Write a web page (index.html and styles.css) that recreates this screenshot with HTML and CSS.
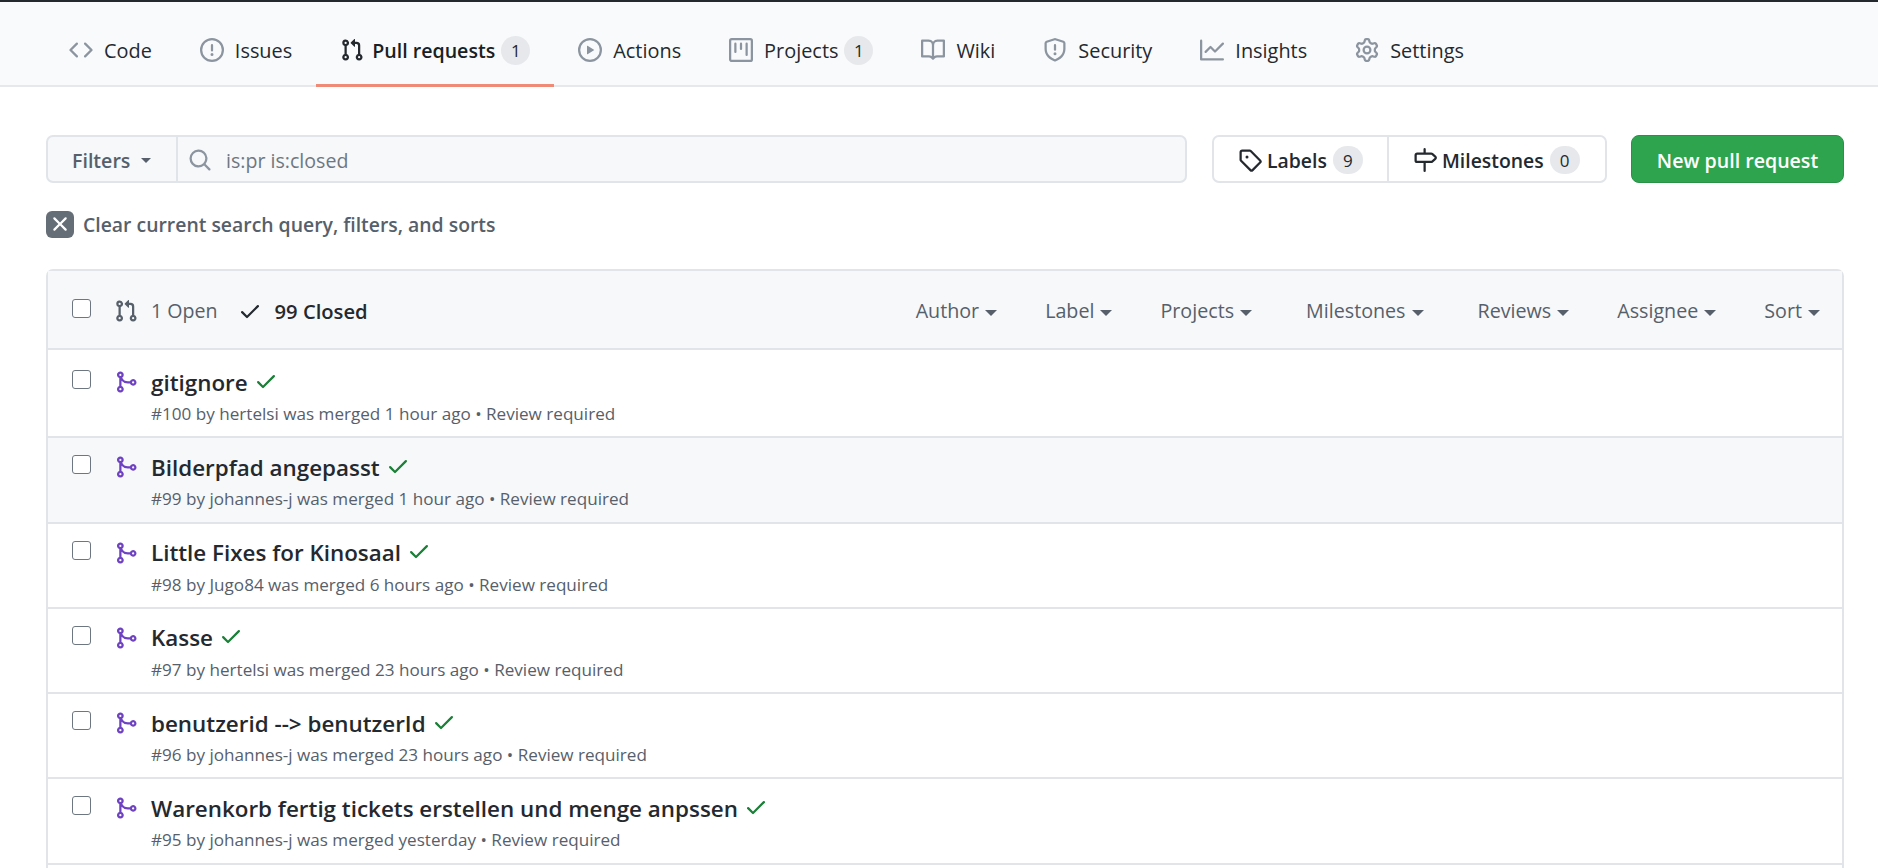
FILE: index.html
```html
<!DOCTYPE html>
<html lang="en">
  <head>
    <meta charset="UTF-8" />
    <title>Pull requests</title>
    <link rel="stylesheet" href="styles.css">
  </head>

  <body>
    <svg class="defs" aria-hidden="true">
      <symbol id="i-code" viewBox="0 0 16 16"><path d="m11.28 3.22 4.25 4.25a.75.75 0 0 1 0 1.06l-4.25 4.25a.749.749 0 0 1-1.275-.326.749.749 0 0 1 .215-.734L13.94 8l-3.72-3.72a.749.749 0 0 1 .326-1.275.749.749 0 0 1 .734.215Zm-6.56 0a.751.751 0 0 1 1.042.018.751.751 0 0 1 .018 1.042L2.06 8l3.72 3.72a.749.749 0 0 1-.326 1.275.749.749 0 0 1-.734-.215L.47 8.53a.75.75 0 0 1 0-1.06Z"/></symbol>
      <symbol id="i-issue" viewBox="0 0 16 16"><path d="M8 1.5a6.5 6.5 0 100 13 6.5 6.5 0 000-13zM0 8a8 8 0 1116 0A8 8 0 010 8zm9 3a1 1 0 11-2 0 1 1 0 012 0zm-.25-6.25a.75.75 0 00-1.5 0v3.5a.75.75 0 001.5 0v-3.5z"/></symbol>
      <symbol id="i-pr" viewBox="0 0 16 16"><path d="M1.5 3.25a2.25 2.25 0 1 1 3 2.122v5.256a2.251 2.251 0 1 1-1.5 0V5.372A2.25 2.25 0 0 1 1.5 3.25Zm5.677-.177L9.573.677A.25.25 0 0 1 10 .854V2.5h1A2.5 2.5 0 0 1 13.5 5v5.628a2.251 2.251 0 1 1-1.5 0V5a1 1 0 0 0-1-1h-1v1.646a.25.25 0 0 1-.427.177L7.177 3.427a.25.25 0 0 1 0-.354ZM3.75 2.5a.75.75 0 1 0 0 1.5.75.75 0 0 0 0-1.5Zm0 9.5a.75.75 0 1 0 0 1.5.75.75 0 0 0 0-1.5Zm8.25.75a.75.75 0 1 0 1.5 0 .75.75 0 0 0-1.5 0Z"/></symbol>
      <symbol id="i-play" viewBox="0 0 16 16"><path d="M8 0a8 8 0 1 1 0 16A8 8 0 0 1 8 0ZM1.5 8a6.5 6.5 0 1 0 13 0 6.5 6.5 0 0 0-13 0Zm4.879-2.773 4.264 2.559a.25.25 0 0 1 0 .428l-4.264 2.559A.25.25 0 0 1 6 10.559V5.442a.25.25 0 0 1 .379-.215Z"/></symbol>
      <symbol id="i-project" viewBox="0 0 16 16"><path d="M1.75 0A1.75 1.75 0 0 0 0 1.75v12.5C0 15.216.784 16 1.75 16h12.5A1.75 1.75 0 0 0 16 14.25V1.75A1.75 1.75 0 0 0 14.25 0ZM1.5 1.75a.25.25 0 0 1 .25-.25h12.5a.25.25 0 0 1 .25.25v12.5a.25.25 0 0 1-.25.25H1.75a.25.25 0 0 1-.25-.25ZM11.75 3a.75.75 0 0 0-.75.75v7.5a.75.75 0 0 0 1.5 0v-7.5a.75.75 0 0 0-.75-.75Zm-8.25.75a.75.75 0 0 1 1.5 0v5.5a.75.75 0 0 1-1.5 0ZM8 3a.75.75 0 0 0-.75.75v3.5a.75.75 0 0 0 1.5 0v-3.5A.75.75 0 0 0 8 3Z"/></symbol>
      <symbol id="i-book" viewBox="0 0 16 16"><path d="M0 1.75A.75.75 0 0 1 .75 1h4.253c1.227 0 2.317.59 3 1.501A3.743 3.743 0 0 1 11.006 1h4.245a.75.75 0 0 1 .75.75v10.5a.75.75 0 0 1-.75.75h-4.507a2.25 2.25 0 0 0-1.591.659l-.622.621a.75.75 0 0 1-1.06 0l-.622-.621A2.25 2.25 0 0 0 5.258 13H.75a.75.75 0 0 1-.75-.75Zm7.251 10.324.004-5.073-.002-2.253A2.25 2.25 0 0 0 5.003 2.5H1.5v9h3.757a3.75 3.75 0 0 1 1.994.574ZM8.755 4.75l-.004 7.322a3.752 3.752 0 0 1 1.992-.572H14.5v-9h-3.495a2.25 2.25 0 0 0-2.25 2.25Z"/></symbol>
      <symbol id="i-shield" viewBox="0 0 16 16"><path d="M7.467.133a1.748 1.748 0 0 1 1.066 0l5.25 1.68A1.75 1.75 0 0 1 15 3.48V7c0 1.566-.32 3.182-1.303 4.682-.983 1.498-2.585 2.813-5.032 3.855a1.697 1.697 0 0 1-1.33 0c-2.447-1.042-4.049-2.357-5.032-3.855C1.32 10.182 1 8.566 1 7V3.48a1.75 1.75 0 0 1 1.217-1.667Zm.61 1.429a.25.25 0 0 0-.153 0l-5.25 1.68a.25.25 0 0 0-.174.238V7c0 1.358.275 2.666 1.057 3.86.784 1.194 2.121 2.34 4.366 3.297a.196.196 0 0 0 .154 0c2.245-.956 3.582-2.104 4.366-3.298C13.225 9.666 13.5 8.36 13.5 7V3.48a.251.251 0 0 0-.174-.237l-5.25-1.68ZM8.75 4.75v3a.75.75 0 0 1-1.5 0v-3a.75.75 0 0 1 1.5 0ZM9 10.5a1 1 0 1 1-2 0 1 1 0 0 1 2 0Z"/></symbol>
      <symbol id="i-graph" viewBox="0 0 16 16"><path d="M1.5 1.75V13.5h13.75a.75.75 0 0 1 0 1.5H.75a.75.75 0 0 1-.75-.75V1.75a.75.75 0 0 1 1.5 0Zm14.28 2.53-5.25 5.25a.75.75 0 0 1-1.06 0L7 7.06 4.28 9.78a.751.751 0 0 1-1.042-.018.751.751 0 0 1-.018-1.042l3.25-3.25a.75.75 0 0 1 1.06 0L10 7.94l4.72-4.72a.751.751 0 0 1 1.042.018.751.751 0 0 1 .018 1.042Z"/></symbol>
      <symbol id="i-gear" viewBox="0 0 16 16"><path d="M8 0a8.2 8.2 0 0 1 .701.031C9.444.095 9.99.645 10.16 1.29l.288 1.107c.018.066.079.158.212.224.231.114.454.243.668.386.123.082.233.09.299.071l1.103-.303c.644-.176 1.392.021 1.82.63.27.385.506.792.704 1.218.315.675.111 1.422-.364 1.891l-.814.806c-.049.048-.098.147-.088.294.016.257.016.515 0 .772-.01.147.038.246.088.294l.814.806c.475.469.679 1.216.364 1.891a7.977 7.977 0 0 1-.704 1.217c-.428.61-1.176.807-1.82.63l-1.102-.302c-.067-.019-.177-.011-.3.071a5.909 5.909 0 0 1-.668.386c-.133.066-.194.158-.211.224l-.29 1.106c-.168.646-.715 1.196-1.458 1.26a8.006 8.006 0 0 1-1.402 0c-.743-.064-1.289-.614-1.458-1.26l-.289-1.106c-.018-.066-.079-.158-.212-.224a5.738 5.738 0 0 1-.668-.386c-.123-.082-.233-.09-.299-.071l-1.103.303c-.644.176-1.392-.021-1.82-.63a8.12 8.12 0 0 1-.704-1.218c-.315-.675-.111-1.422.363-1.891l.815-.806c.05-.048.098-.147.088-.294a6.214 6.214 0 0 1 0-.772c.01-.147-.038-.246-.088-.294l-.815-.806C.635 6.045.431 5.298.746 4.623a7.92 7.92 0 0 1 .704-1.217c.428-.61 1.176-.807 1.82-.63l1.102.302c.067.019.177.011.3-.071.214-.143.437-.272.668-.386.133-.066.194-.158.211-.224l.29-1.106C6.009.645 6.556.095 7.299.03 7.53.01 7.764 0 8 0Zm-.571 1.525c-.036.003-.108.036-.137.146l-.289 1.105c-.147.561-.549.967-.998 1.189-.173.086-.34.183-.5.29-.417.278-.97.423-1.529.27l-1.103-.303c-.109-.03-.175.016-.195.045-.22.312-.412.644-.573.99-.014.031-.021.11.059.19l.815.806c.411.406.562.957.53 1.456a4.709 4.709 0 0 0 0 .582c.032.499-.119 1.05-.53 1.456l-.815.806c-.081.08-.073.159-.059.19.162.346.353.677.573.989.02.03.085.076.195.046l1.102-.303c.56-.153 1.113-.008 1.53.27.161.107.328.204.501.29.447.222.85.629.997 1.189l.289 1.105c.029.109.101.143.137.146a6.6 6.6 0 0 0 1.142 0c.036-.003.108-.036.137-.146l.289-1.105c.147-.561.549-.967.998-1.189.173-.086.34-.183.5-.29.417-.278.97-.423 1.529-.27l1.103.303c.109.029.175-.016.195-.045.22-.313.411-.644.573-.99.014-.031.021-.11-.059-.19l-.815-.806c-.411-.406-.562-.957-.53-1.456a4.709 4.709 0 0 0 0-.582c-.032-.499.119-1.05.53-1.456l.815-.806c.081-.08.073-.159.059-.19a6.464 6.464 0 0 0-.573-.989c-.02-.03-.085-.076-.195-.046l-1.102.303c-.56.153-1.113.008-1.53-.27a4.44 4.44 0 0 0-.501-.29c-.447-.222-.85-.629-.997-1.189l-.289-1.105c-.029-.11-.101-.143-.137-.146a6.6 6.6 0 0 0-1.142 0ZM11 8a3 3 0 1 1-6 0 3 3 0 0 1 6 0ZM9.5 8a1.5 1.5 0 1 0-3.001.001A1.5 1.5 0 0 0 9.5 8Z"/></symbol>
      <symbol id="i-search" viewBox="0 0 16 16"><path d="M10.68 11.74a6 6 0 0 1-7.922-8.982 6 6 0 0 1 8.982 7.922l3.04 3.04a.749.749 0 0 1-.326 1.275.749.749 0 0 1-.734-.215ZM11.5 7a4.499 4.499 0 1 0-8.997 0A4.499 4.499 0 0 0 11.5 7Z"/></symbol>
      <symbol id="i-tag" viewBox="0 0 16 16"><path d="M1 7.775V2.75C1 1.784 1.784 1 2.75 1h5.025c.464 0 .91.184 1.238.513l6.25 6.25a1.75 1.75 0 0 1 0 2.474l-5.026 5.026a1.75 1.75 0 0 1-2.474 0l-6.25-6.25A1.75 1.75 0 0 1 1 7.775Zm1.5 0c0 .066.026.13.073.177l6.25 6.25a.25.25 0 0 0 .354 0l5.025-5.025a.25.25 0 0 0 0-.354l-6.25-6.25a.25.25 0 0 0-.177-.073H2.75a.25.25 0 0 0-.25.25ZM6 5a1 1 0 1 1 0 2 1 1 0 0 1 0-2Z"/></symbol>
      <symbol id="i-milestone" viewBox="0 0 16 16"><path d="M7.75 0a.75.75 0 0 1 .75.75V3h3.634c.414 0 .814.147 1.13.414l2.07 1.75a1.75 1.75 0 0 1 0 2.672l-2.07 1.75a1.75 1.75 0 0 1-1.13.414H8.5v5.25a.75.75 0 0 1-1.5 0V10H2.75A1.75 1.75 0 0 1 1 8.25v-3.5C1 3.784 1.784 3 2.75 3H7V.75A.75.75 0 0 1 7.75 0Zm4.384 8.5a.25.25 0 0 0 .161-.06l2.07-1.75a.248.248 0 0 0 0-.38l-2.07-1.75a.25.25 0 0 0-.161-.06H2.75a.25.25 0 0 0-.25.25v3.5c0 .138.112.25.25.25h9.384Z"/></symbol>
      <symbol id="i-check" viewBox="0 0 16 16"><path d="M13.78 4.22a.75.75 0 0 1 0 1.06l-7.25 7.25a.75.75 0 0 1-1.06 0L2.22 9.28a.751.751 0 0 1 .018-1.042.751.751 0 0 1 1.042-.018L6 10.94l6.72-6.72a.75.75 0 0 1 1.06 0Z"/></symbol>
      <symbol id="i-merge" viewBox="0 0 16 16"><path d="M5.45 5.154A4.25 4.25 0 0 0 9.25 7.5h1.378a2.251 2.251 0 1 1 0 1.5H9.25A5.734 5.734 0 0 1 5 7.123v3.505a2.25 2.25 0 1 1-1.5 0V5.372a2.25 2.25 0 1 1 1.95-.218ZM4.25 13.5a.75.75 0 1 0 0-1.5.75.75 0 0 0 0 1.5Zm8.5-4.5a.75.75 0 1 0 0-1.5.75.75 0 0 0 0 1.5ZM5 3.25a.75.75 0 1 0 0 .005V3.25Z"/></symbol>
      <symbol id="i-x" viewBox="0 0 16 16"><path d="M3.72 3.72a.75.75 0 0 1 1.06 0L8 6.94l3.22-3.22a.749.749 0 0 1 1.275.326.749.749 0 0 1-.215.734L9.06 8l3.22 3.22a.749.749 0 0 1-.326 1.275.749.749 0 0 1-.734-.215L8 9.06l-3.22 3.22a.751.751 0 0 1-1.042-.018.751.751 0 0 1-.018-1.042L6.94 8 3.72 4.78a.75.75 0 0 1 0-1.06Z"/></symbol>
    </svg>

    <nav class="repo-nav">
      <a class="tab"><svg class="icon"><use href="#i-code"/></svg>Code</a>
      <a class="tab"><svg class="icon"><use href="#i-issue"/></svg>Issues</a>
      <a class="tab selected"><svg class="icon"><use href="#i-pr"/></svg>Pull requests<span class="counter">1</span></a>
      <a class="tab"><svg class="icon"><use href="#i-play"/></svg>Actions</a>
      <a class="tab"><svg class="icon"><use href="#i-project"/></svg>Projects<span class="counter">1</span></a>
      <a class="tab"><svg class="icon"><use href="#i-book"/></svg>Wiki</a>
      <a class="tab"><svg class="icon"><use href="#i-shield"/></svg>Security</a>
      <a class="tab"><svg class="icon"><use href="#i-graph"/></svg>Insights</a>
      <a class="tab"><svg class="icon"><use href="#i-gear"/></svg>Settings</a>
    </nav>

    <main class="content">
      <div class="toolbar">
        <div class="search">
          <button class="filters">Filters<span class="caret"></span></button>
          <div class="search-field">
            <svg class="icon"><use href="#i-search"/></svg>
            <span>is:pr is:closed</span>
          </div>
        </div>
        <div class="label-group">
          <a class="label-link"><svg class="icon"><use href="#i-tag"/></svg>Labels<span class="counter small">9</span></a>
          <a class="label-link"><svg class="icon"><use href="#i-milestone"/></svg>Milestones<span class="counter small">0</span></a>
        </div>
        <button class="new-pr">New pull request</button>
      </div>

      <div class="clear-query">
        <span class="clear-box"><svg class="icon"><use href="#i-x"/></svg></span>
        Clear current search query, filters, and sorts
      </div>

      <div class="issues">
        <div class="issues-head">
          <span class="check"></span>
          <svg class="icon state"><use href="#i-pr"/></svg>
          <span class="state-open">1 Open</span>
          <svg class="icon closed-check"><use href="#i-check"/></svg>
          <span class="state-closed">99 Closed</span>
          <div class="sorts">
            <span>Author<i class="caret"></i></span>
            <span>Label<i class="caret"></i></span>
            <span>Projects<i class="caret"></i></span>
            <span class="wide">Milestones<i class="caret"></i></span>
            <span>Reviews<i class="caret"></i></span>
            <span>Assignee<i class="caret"></i></span>
            <span>Sort<i class="caret"></i></span>
          </div>
        </div>

        <div class="row">
          <span class="check"></span>
          <svg class="icon merged"><use href="#i-merge"/></svg>
          <div class="row-body">
            <div class="row-title">gitignore<svg class="icon ok"><use href="#i-check"/></svg></div>
            <div class="row-meta">#100 by hertelsi was merged 1 hour ago • Review required</div>
          </div>
        </div>
        <div class="row hover">
          <span class="check"></span>
          <svg class="icon merged"><use href="#i-merge"/></svg>
          <div class="row-body">
            <div class="row-title">Bilderpfad angepasst<svg class="icon ok"><use href="#i-check"/></svg></div>
            <div class="row-meta">#99 by johannes-j was merged 1 hour ago • Review required</div>
          </div>
        </div>
        <div class="row">
          <span class="check"></span>
          <svg class="icon merged"><use href="#i-merge"/></svg>
          <div class="row-body">
            <div class="row-title">Little Fixes for Kinosaal<svg class="icon ok"><use href="#i-check"/></svg></div>
            <div class="row-meta">#98 by Jugo84 was merged 6 hours ago • Review required</div>
          </div>
        </div>
        <div class="row">
          <span class="check"></span>
          <svg class="icon merged"><use href="#i-merge"/></svg>
          <div class="row-body">
            <div class="row-title">Kasse<svg class="icon ok"><use href="#i-check"/></svg></div>
            <div class="row-meta">#97 by hertelsi was merged 23 hours ago • Review required</div>
          </div>
        </div>
        <div class="row">
          <span class="check"></span>
          <svg class="icon merged"><use href="#i-merge"/></svg>
          <div class="row-body">
            <div class="row-title">benutzerid --&gt; benutzerId<svg class="icon ok"><use href="#i-check"/></svg></div>
            <div class="row-meta">#96 by johannes-j was merged 23 hours ago • Review required</div>
          </div>
        </div>
        <div class="row">
          <span class="check"></span>
          <svg class="icon merged"><use href="#i-merge"/></svg>
          <div class="row-body">
            <div class="row-title">Warenkorb fertig tickets erstellen und menge anpssen<svg class="icon ok"><use href="#i-check"/></svg></div>
            <div class="row-meta">#95 by johannes-j was merged yesterday • Review required</div>
          </div>
        </div>
      </div>
    </main>
  </body>
</html>
```

FILE: styles.css
```css
* {
  margin: 0;
  padding: 0;
  box-sizing: border-box;
}

html,
body {
  height: 868px;
  overflow: hidden;
}

body {
  font-family: "Open Sans", "Noto Sans", sans-serif;
  font-size: 19.6px;
  color: #24292f;
  background-color: #fff;
  border-top: 2px solid #24292f;
}

.defs {
  display: none;
}

.icon {
  width: 24px;
  height: 24px;
  fill: currentColor;
  flex-shrink: 0;
}

.repo-nav {
  display: flex;
  height: 85px;
  padding-left: 45px;
  background-color: #f9fafb;
  border-bottom: 2px solid #e6e8eb;
}

.tab {
  display: flex;
  align-items: center;
  height: 85px;
  padding: 14px 24px 0;
  border-bottom: 3px solid transparent;
  color: #24292f;
  font-size: 19.9px;
}

.tab .icon {
  margin-right: 11px;
  color: #8c959f;
}

.tab.selected {
  font-size: 19.6px;
  font-weight: 600;
  border-bottom-color: #ee8a76;
  color: #1a1f24;
}

.tab.selected .icon {
  margin-right: 8px;
  color: #24292f;
}

.counter {
  display: flex;
  align-items: center;
  justify-content: center;
  width: 29px;
  height: 29px;
  margin-left: 6px;
  border-radius: 50%;
  background-color: #e6e8eb;
  font-size: 17px;
  font-weight: 400;
  color: #24292f;
}

.content {
  padding: 48px 34px 0 46px;
}

.toolbar {
  display: flex;
  height: 48px;
}

.search {
  display: flex;
  width: 1141px;
  border: 2px solid #e1e4e8;
  border-radius: 7px;
  background-color: #f6f8fa;
}

.filters {
  display: flex;
  align-items: center;
  width: 130px;
  padding: 2px 0 0 24px;
  border: none;
  border-right: 2px solid #e1e4e8;
  background: none;
  font: inherit;
  font-weight: 600;
  color: #57606a;
}

.caret {
  display: inline-block;
  vertical-align: middle;
  margin-left: 6px;
  border-top: 6px solid currentColor;
  border-left: 6px solid transparent;
  border-right: 6px solid transparent;
}

.filters .caret {
  margin-left: 11px;
  border-top-width: 5px;
  border-left-width: 5px;
  border-right-width: 5px;
}

.search-field {
  display: flex;
  align-items: center;
  gap: 14px;
  padding: 2px 0 0 10px;
  color: #6e7781;
}

.search-field .icon {
  color: #8c959f;
}

.label-group {
  display: flex;
  width: 395px;
  margin-left: 25px;
  border: 2px solid #e1e4e8;
  border-radius: 7px;
}

.label-link {
  display: flex;
  align-items: center;
  padding: 2px 24px 0;
  font-weight: 600;
  color: #24292f;
  font-size: 19.4px;
}

.label-link:first-child {
  width: 175px;
  padding-right: 0;
  border-right: 2px solid #e1e4e8;
}

.label-link .icon {
  margin-right: 5px;
}

.counter.small {
  width: 30px;
  height: 28px;
  border-radius: 14px;
  margin-left: 6px;
}

.new-pr {
  width: 213px;
  margin-left: 24px;
  padding-top: 3px;
  border: 1px solid #2a9147;
  border-radius: 8px;
  background-color: #2ea44f;
  font: inherit;
  font-weight: 600;
  color: #fff;
}

.clear-query {
  display: flex;
  align-items: center;
  height: 28px;
  margin-top: 27px;
  font-weight: 600;
  color: #57606a;
  font-size: 19.4px;
}

.clear-box {
  display: flex;
  align-items: center;
  justify-content: center;
  width: 28px;
  height: 27px;
  margin-right: 9px;
  border-radius: 6px;
  background-color: #656d76;
  color: #fff;
}

.issues {
  height: 620px;
  margin-top: 31px;
  border: 2px solid #e1e4e8;
  border-radius: 7px;
}

.issues-head {
  display: flex;
  align-items: center;
  height: 79px;
  margin-bottom: 3px;
  padding: 2px 22px 0 24px;
  background-color: #f6f8fa;
  border-bottom: 2px solid #e1e4e8;
  color: #57606a;
}

.issues-head .check {
  margin-bottom: 5px;
}

.check {
  width: 19px;
  height: 19px;
  border: 1px solid #6e7781;
  border-radius: 3px;
  background-color: #fff;
  flex-shrink: 0;
}

.icon.state {
  margin-left: 23px;
  margin-right: 13px;
}

.icon.closed-check {
  margin-left: 20px;
  margin-right: 13px;
  color: #24292f;
}

.state-closed {
  font-size: 20.2px;
  font-weight: 600;
  color: #24292f;
}

.sorts {
  display: flex;
  gap: 48px;
  margin-left: auto;
  font-size: 19.7px;
}

.sorts .wide {
  margin: 0 6px;
}

.row {
  display: flex;
  height: 85.3px;
  padding: 13px 24px 0;
  border-bottom: 2px solid #e1e4e8;
}

.row.hover {
  background-color: #f6f8fa;
}

.row .check {
  margin-top: 4px;
}

.icon.merged {
  margin: 4px 13px 0 23px;
  color: #6f42c1;
}

.row-title {
  display: flex;
  align-items: center;
  height: 32px;
  font-size: 22.4px;
  font-weight: 600;
  color: #24292f;
}

.icon.ok {
  margin-left: 6px;
  margin-bottom: 3px;
  color: #1a7f37;
}

.row-meta {
  margin-top: 4px;
  font-size: 17.1px;
  color: #57606a;
}
```
